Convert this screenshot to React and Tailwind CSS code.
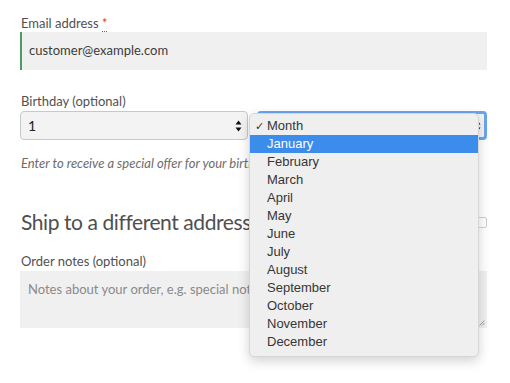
import React from 'react'

const months = [
  'January', 'February', 'March', 'April', 'May', 'June',
  'July', 'August', 'September', 'October', 'November', 'December',
]

// small up/down arrows drawn by the native select
function SelectArrows() {
  return (
    <svg width="7" height="12" viewBox="0 0 7 12" className="shrink-0">
      <path d="M3.5 0.5 L6.5 4.5 L0.5 4.5 Z" fill="#111" />
      <path d="M3.5 11.5 L6.5 7.5 L0.5 7.5 Z" fill="#111" />
    </svg>
  )
}

export default function App() {
  return (
    <div
      className="relative w-[510px] h-[383px] bg-white overflow-hidden text-[#515151]"
      style={{ fontFamily: 'Lato, "Open Sans", sans-serif' }}
    >
      <div className="pl-[20px] pr-[23px] pt-[14px]">
        {/* Email */}
        <label className="block text-[13px] leading-[18px] pl-[1px]">
          Email address{' '}
          <abbr className="text-[#e2401c] no-underline border-b border-dotted border-[#e2401c]">*</abbr>
        </label>
        <div className="h-[38px] bg-[#f0f0f0] border-l-2 border-[#4e9a67] flex items-center pl-[7px] text-[13px] text-[#3d3d3d]">
          customer@example.com
        </div>

        {/* Birthday */}
        <label className="block mt-[22px] text-[13px] leading-[18px] pl-[1px]">Birthday (optional)</label>
        <div className="mt-[1px] flex items-center gap-[9px]">
          <div className="w-[228px] h-[29px] bg-[#f3f3f3] border border-[#c8c8c8] rounded-[4px] flex items-center justify-between pl-[7px] pr-[5px] text-[14px] text-[#222]">
            <span>1</span>
            <SelectArrows />
          </div>
          <div className="w-[230px] h-[29px] bg-[#f5f5f5] border-[3px] border-[#6aa5ec] rounded-[4px] flex items-center justify-end pr-[3px]">
            <SelectArrows />
          </div>
        </div>
        <p className="mt-[14px] text-[13px] leading-[18px] italic text-[#6d6d6d] pl-[1px]">
          Enter to receive a special offer for your birthday
        </p>

        {/* Shipping */}
        <div className="mt-[36px] flex items-center justify-between">
          <h3 className="text-[21px] leading-[28px] font-normal tracking-[-0.02em] text-[#4f4f4f] pl-[1px]">Ship to a different address?</h3>
          <span className="w-[11px] h-[11px] border border-[#cfcfcf] rounded-[2px] bg-white" />
        </div>

        {/* Order notes */}
        <label className="block mt-[16px] text-[13px] leading-[18px] pl-[1px]">Order notes (optional)</label>
        <div className="relative mt-[1px] h-[57px] bg-[#f0f0f0] pl-[8px] pt-[9px] text-[13px] text-[#8a8a8a]">
          Notes about your order, e.g. special notes for delivery.
          <svg width="6" height="6" viewBox="0 0 6 6" className="absolute right-[2px] bottom-[2px]">
            <path d="M5.5 0.5 L0.5 5.5 M5.5 3 L3 5.5" stroke="#888" strokeWidth="0.8" />
          </svg>
        </div>
      </div>

      {/* Open native select menu */}
      <div
        className="absolute left-[249px] top-[113px] w-[230px] h-[244px] bg-[#efefef] rounded-[5px] border border-[#d6d6d6] shadow-[0_4px_12px_rgba(0,0,0,0.18)] pt-[3px] text-[13px] text-[#363636]"
        style={{ fontFamily: '"Liberation Sans", Arial, sans-serif' }}
      >
        <div className="relative h-[18px] flex items-center pl-[17px]">
          <span className="absolute left-[5px] text-[11px]">✓</span>
          Month
        </div>
        {months.map((m, i) => (
          <div
            key={m}
            className={
              i === 0
                ? 'h-[18px] flex items-center pl-[17px] bg-[#3c8ceb] text-white'
                : 'h-[18px] flex items-center pl-[17px]'
            }
          >
            {m}
          </div>
        ))}
      </div>
    </div>
  )
}
